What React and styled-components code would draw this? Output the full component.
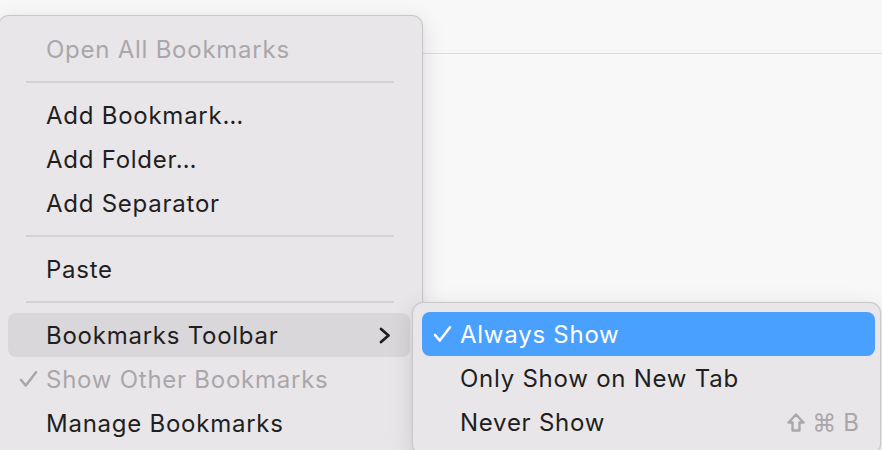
import styled, { createGlobalStyle } from "styled-components";

const GlobalStyle = createGlobalStyle`
  html, body {
    margin: 0;
    padding: 0;
    background: #f8f8f9;
    font-family: Inter, "Noto Sans", "DejaVu Sans", sans-serif;
    -webkit-font-smoothing: antialiased;
  }
`;

const Page = styled.div`
  position: relative;
  width: 882px;
  height: 450px;
  overflow: hidden;
  background: #f8f8f9;
`;

const TopBar = styled.div`
  height: 54px;
  box-sizing: border-box;
  border-bottom: 1px solid #dcdcde;
`;

const Menu = styled.div`
  position: absolute;
  top: ${(p) => p.$top}px;
  left: ${(p) => p.$left}px;
  width: ${(p) => p.$width}px;
  box-sizing: border-box;
  padding: ${(p) => p.$padTop}px ${(p) => p.$padR}px 10px ${(p) => p.$padL}px;
  background: #e9e6e9;
  border: 1px solid rgba(0, 0, 0, 0.13);
  border-radius: 11px;
  box-shadow: 0 6px 24px rgba(0, 0, 0, 0.12), 0 1px 3px rgba(0, 0, 0, 0.06);
  z-index: ${(p) => p.$z || 1};
`;

const Row = styled.div`
  position: relative;
  display: flex;
  align-items: center;
  height: 44px;
  padding: 0 16px 0 38px;
  border-radius: 8px;
  font-size: 24px;
  letter-spacing: 0.75px;
  color: ${(p) => (p.$active ? "#ffffff" : p.$disabled ? "#a9a7aa" : "#1f1e21")};
  background: ${(p) => (p.$active ? "#4aa0fe" : p.$hover ? "#d9d7da" : "transparent")};
`;

const Label = styled.span`
  flex: 1;
  white-space: nowrap;
`;

const Check = styled.svg`
  position: absolute;
  left: ${(p) => p.$left}px;
  top: 50%;
  transform: translateY(-50%);
  width: 19px;
  height: 17px;
`;

const Chevron = styled.svg`
  width: 12px;
  height: 17px;
  margin-right: 3px;
`;

const Shortcut = styled.span`
  display: flex;
  align-items: center;
  gap: 7px;
  color: #a9a7aa;
  font-size: 24px;
  letter-spacing: 0;
`;

const Separator = styled.div`
  height: 22px;
  display: flex;
  align-items: center;
  padding: 0 16px 0 18px;
  &::after {
    content: "";
    flex: 1;
    height: 2px;
    background: #d4d2d5;
  }
`;

const CheckMark = ({ color, left }) => (
  <Check $left={left} viewBox="0 0 19 17">
    <path
      d="M2 9.5 L6.8 15 L17 1.8"
      fill="none"
      stroke={color}
      strokeWidth="2.6"
      strokeLinecap="round"
      strokeLinejoin="round"
    />
  </Check>
);

const ShiftIcon = () => (
  <svg width="18" height="19" viewBox="0 0 18 19">
    <path
      d="M9 1.5 L16.5 9.5 L12.5 9.5 L12.5 17.5 L5.5 17.5 L5.5 9.5 L1.5 9.5 Z"
      fill="none"
      stroke="#a9a7aa"
      strokeWidth="2.4"
      strokeLinejoin="round"
    />
  </svg>
);

const SubMenu = () => (
  <Menu $top={-11} $left={404} $width={469} $padTop={9} $padL={9} $padR={5} $z={2}>
    <Row $active>
      <CheckMark color="#ffffff" left={11} />
      <Label>Always Show</Label>
    </Row>
    <Row>
      <Label>Only Show on New Tab</Label>
    </Row>
    <Row>
      <Label>Never Show</Label>
      <Shortcut>
        <ShiftIcon />
        <span>⌘</span>
        <span>B</span>
      </Shortcut>
    </Row>
  </Menu>
);

export default function App() {
  return (
    <Page>
      <GlobalStyle />
      <TopBar />
      <Menu $top={15} $left={-2} $width={425} $padTop={11} $padL={9} $padR={12}>
        <Row $disabled>
          <Label>Open All Bookmarks</Label>
        </Row>
        <Separator />
        <Row>
          <Label>Add Bookmark…</Label>
        </Row>
        <Row>
          <Label>Add Folder…</Label>
        </Row>
        <Row>
          <Label>Add Separator</Label>
        </Row>
        <Separator />
        <Row>
          <Label>Paste</Label>
        </Row>
        <Separator />
        <Row $hover>
          <Label>Bookmarks Toolbar</Label>
          <Chevron viewBox="0 0 12 17">
            <path
              d="M2 2 L9.5 8.5 L2 15"
              fill="none"
              stroke="#1f1e21"
              strokeWidth="2.8"
              strokeLinecap="round"
              strokeLinejoin="round"
            />
          </Chevron>
          <SubMenu />
        </Row>
        <Row $disabled>
          <CheckMark color="#a9a7aa" left={11} />
          <Label>Show Other Bookmarks</Label>
        </Row>
        <Row>
          <Label>Manage Bookmarks</Label>
        </Row>
      </Menu>
    </Page>
  );
}
